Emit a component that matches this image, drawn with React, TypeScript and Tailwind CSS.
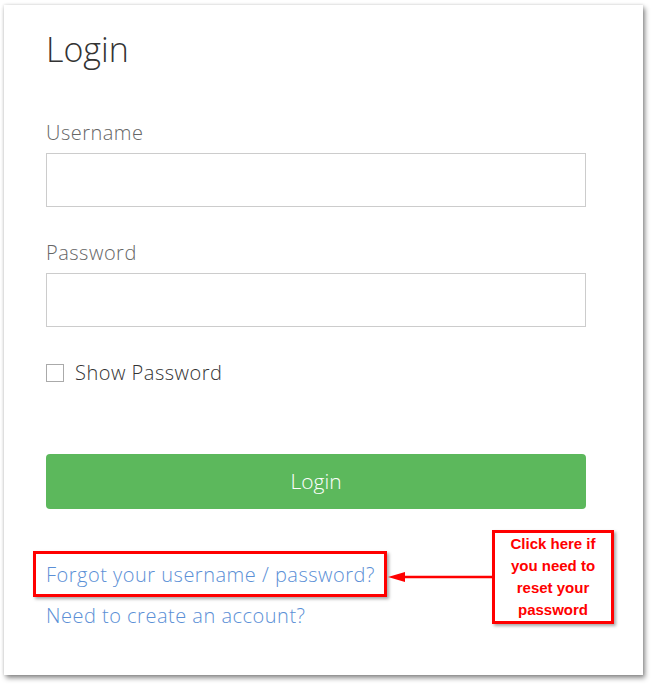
import React from "react";

export default function App() {
  return (
    <div className="min-h-[685px] w-[652px] bg-white pl-[4px] pt-[5px]">
      <div className="relative h-[670px] w-[639px] bg-white pl-[42px] pt-[24px] font-['Open_Sans',sans-serif] shadow-[2px_3px_5px_rgba(0,0,0,0.45),0_0_3px_rgba(0,0,0,0.15)]">
        <h1 className="text-[34px] font-light leading-[40px] text-[#333]">Login</h1>

        <label className="mt-[50px] block text-[20px] font-light leading-[28px] tracking-[0.5px] text-[#666]">Username</label>
        <div className="mt-[6px] h-[54px] w-[540px] border border-[#ccc] bg-white" />

        <label className="mt-[32px] block text-[20px] font-light leading-[28px] tracking-[0.5px] text-[#666]">Password</label>
        <div className="mt-[6px] h-[54px] w-[540px] border border-[#ccc] bg-white" />

        <div className="mt-[32px] flex h-[28px] items-center">
          <span className="block h-[18px] w-[18px] border border-[#aaa] bg-white" />
          <span className="ml-[11px] text-[20px] font-light leading-[28px] tracking-[0.5px] text-[#333]">Show Password</span>
        </div>

        <button className="mt-[67px] block h-[55px] w-[540px] rounded-[4px] bg-[#5cb85c] text-[21px] font-light text-white">
          Login
        </button>

        <div className="mt-[52px] text-[20px] font-light leading-[28px] tracking-[0.5px] text-[#5b8fd6]">Forgot your username / password?</div>
        <div className="mt-[13px] text-[20px] font-light leading-[28px] tracking-[0.5px] text-[#5b8fd6]">Need to create an account?</div>

        {/* annotation: highlight box */}
        <div className="absolute left-[29px] top-[546px] h-[46px] w-[354px] border-[3px] border-[#ff0000] shadow-[2px_2px_3px_rgba(0,0,0,0.35)]" />

        {/* annotation: arrow */}
        <svg className="absolute left-[383px] top-[565px]" width="106" height="14" viewBox="0 0 106 14">
          <line x1="14" y1="7" x2="106" y2="7" stroke="#ff0000" strokeWidth="2.5" />
          <polygon points="1,7 18,2 18,12" fill="#ff0000" />
        </svg>

        {/* annotation: callout */}
        <div className="absolute left-[488px] top-[525px] h-[94px] w-[122px] border-[3px] border-[#ff0000] bg-white text-center font-['Liberation_Sans',sans-serif] text-[15px] font-bold leading-[22px] text-[#ff0000] shadow-[2px_2px_3px_rgba(0,0,0,0.35)]">
          Click here if
          <br />
          you need to
          <br />
          reset your
          <br />
          password
        </div>
      </div>
    </div>
  );
}
